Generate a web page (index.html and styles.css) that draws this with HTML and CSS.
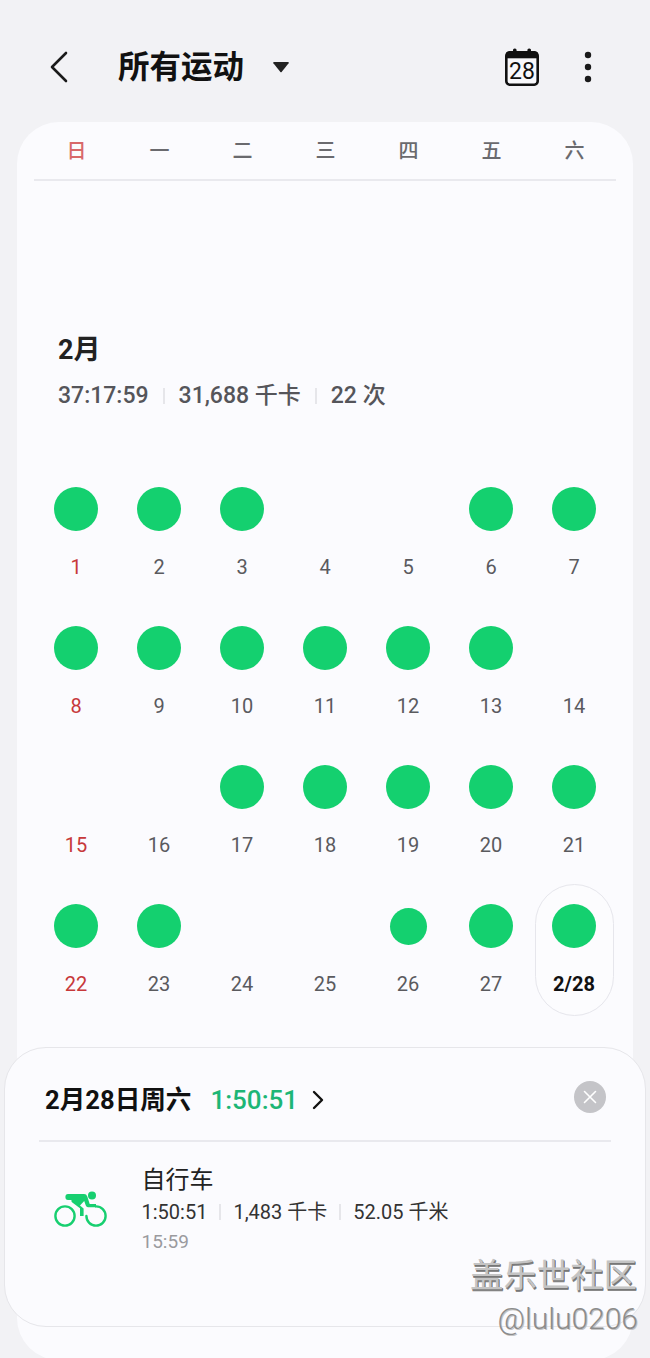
FILE: index.html
```html
<!DOCTYPE html>
<html lang="zh-CN">
<head>
<meta charset="utf-8">
<title>所有运动</title>
<link rel="stylesheet" href="styles.css">
</head>
<body>
<div class="page">
  <header class="topbar">
    <svg class="back" viewBox="0 0 20 32" width="20" height="32"><path d="M17 2 3 16l14 14" fill="none" stroke="#1a1a1a" stroke-width="2.6" stroke-linecap="round" stroke-linejoin="round"/></svg>
    <h1 class="title">所有运动</h1>
    <svg class="caret" viewBox="0 0 16 12" width="16" height="12"><path d="M1 1h14a.8.8 0 0 1 .6 1.2L8.6 11a.8.8 0 0 1-1.2 0L.4 2.2A.8.8 0 0 1 1 1z" fill="#222"/></svg>
    <svg class="cal" viewBox="0 0 34 38" width="34" height="38">
      <rect x="8" y="0.5" width="3.6" height="6" rx="1.6" fill="#111"/>
      <rect x="22.4" y="0.5" width="3.6" height="6" rx="1.6" fill="#111"/>
      <rect x="1.3" y="4.3" width="31.4" height="32.4" rx="3.4" fill="#f8f8fb" stroke="#111" stroke-width="2.6"/>
      <rect x="1.3" y="4.3" width="31.4" height="6" fill="#111"/>
      <text class="cal-num" x="17" y="31">28</text>
    </svg>
    <svg class="more" viewBox="0 0 8 32" width="8" height="32"><circle cx="4" cy="4" r="3.2" fill="#1a1a1a"/><circle cx="4" cy="16" r="3.2" fill="#1a1a1a"/><circle cx="4" cy="28" r="3.2" fill="#1a1a1a"/></svg>
  </header>

  <main class="card">
    <div class="weekdays">
      <span class="wd wd-sun">日</span><span class="wd">一</span><span class="wd">二</span><span class="wd">三</span><span class="wd">四</span><span class="wd">五</span><span class="wd">六</span>
    </div>
    <section class="summary">
      <h2 class="month">2月</h2>
      <div class="stats">
        <span>37:17:59</span><i class="sep"></i><span>31,688 千卡</span><i class="sep"></i><span>22 次</span>
      </div>
    </section>
    <div class="days">
      <div class="day"><b class="dot"></b><span class="num sun">1</span></div>
      <div class="day"><b class="dot"></b><span class="num">2</span></div>
      <div class="day"><b class="dot"></b><span class="num">3</span></div>
      <div class="day"><b class="nodot"></b><span class="num">4</span></div>
      <div class="day"><b class="nodot"></b><span class="num">5</span></div>
      <div class="day"><b class="dot"></b><span class="num">6</span></div>
      <div class="day"><b class="dot"></b><span class="num">7</span></div>

      <div class="day"><b class="dot"></b><span class="num sun">8</span></div>
      <div class="day"><b class="dot"></b><span class="num">9</span></div>
      <div class="day"><b class="dot"></b><span class="num">10</span></div>
      <div class="day"><b class="dot"></b><span class="num">11</span></div>
      <div class="day"><b class="dot"></b><span class="num">12</span></div>
      <div class="day"><b class="dot"></b><span class="num">13</span></div>
      <div class="day"><b class="nodot"></b><span class="num">14</span></div>

      <div class="day"><b class="nodot"></b><span class="num sun">15</span></div>
      <div class="day"><b class="nodot"></b><span class="num">16</span></div>
      <div class="day"><b class="dot"></b><span class="num">17</span></div>
      <div class="day"><b class="dot"></b><span class="num">18</span></div>
      <div class="day"><b class="dot"></b><span class="num">19</span></div>
      <div class="day"><b class="dot"></b><span class="num">20</span></div>
      <div class="day"><b class="dot"></b><span class="num">21</span></div>

      <div class="day"><b class="dot"></b><span class="num sun">22</span></div>
      <div class="day"><b class="dot"></b><span class="num">23</span></div>
      <div class="day"><b class="nodot"></b><span class="num">24</span></div>
      <div class="day"><b class="nodot"></b><span class="num">25</span></div>
      <div class="day"><b class="dot dot-small"></b><span class="num">26</span></div>
      <div class="day"><b class="dot"></b><span class="num">27</span></div>
      <div class="day day-selected"><b class="dot"></b><span class="num num-selected">2/28</span></div>
    </div>
  </main>

  <aside class="sheet">
    <div class="sheet-head">
      <span class="sheet-date">2月28日周六</span>
      <span class="sheet-time">1:50:51</span>
      <svg class="sheet-chevron" viewBox="0 0 12 20" width="12" height="20"><path d="M2 2l8 8-8 8" fill="none" stroke="#111" stroke-width="2.4" stroke-linecap="round" stroke-linejoin="round"/></svg>
      <span class="close">
        <svg viewBox="0 0 14 14" width="14" height="14"><path d="M1.5 1.5l11 11M12.5 1.5l-11 11" stroke="#fff" stroke-width="1.6" stroke-linecap="round"/></svg>
      </span>
    </div>
    <div class="sheet-rule"></div>
    <div class="activity">
      <svg class="bike" viewBox="0 0 60 44" width="60" height="44">
        <circle cx="15" cy="28" r="9.6" fill="none" stroke="#17cf70" stroke-width="2.4"/>
        <path d="M46 18.4a9.6 9.6 0 1 1-9.6 9.6" fill="none" stroke="#17cf70" stroke-width="2.4" stroke-linecap="round"/>
        <circle cx="42" cy="7.4" r="4" fill="#17cf70"/>
        <path d="M18 6H34q2.5 0 3.3 2.4l2.4 7.6H46v3.2H38q-1.6 0-2.2-1.6l-1.6-4.6-4.2 4.6 3.6 3V28h-3.6v-7.8l-8-6q-1.2-1.2-.4-2.2H18q-2.6-.2-2.6-3T18 6z" fill="#17cf70"/>
      </svg>
      <div class="activity-body">
        <div class="activity-name">自行车</div>
        <div class="activity-stats">
          <span>1:50:51</span><i class="sep sep-small"></i><span>1,483 千卡</span><i class="sep sep-small"></i><span>52.05 千米</span>
        </div>
        <div class="activity-at">15:59</div>
      </div>
    </div>
  </aside>

  <div class="watermark">
    <div class="wm-brand">盖乐世社区</div>
    <div class="wm-user">@lulu0206</div>
  </div>
</div>
</body>
</html>
```
FILE: styles.css
```css
* { box-sizing: border-box; }
html, body { margin: 0; padding: 0; }
body {
  background: #f2f2f5;
  font-family: Roboto, "Noto Sans CJK SC", "Noto Sans", sans-serif;
  color: #222;
}
.page {
  position: relative;
  width: 650px;
  height: 1358px;
  overflow: hidden;
}
.topbar {
  height: 122px;
  display: flex;
  align-items: center;
  padding: 14px 0 0 49px;
}
.back { flex: none; margin: -2px 49px 0 0; }
.title {
  margin: 0;
  font-size: 31.5px;
  line-height: 40px;
  font-weight: 700;
  color: #111;
  width: 155px;
}
.caret { flex: none; margin-top: -2px; }
.cal { flex: none; margin-left: 216px; margin-top: -3px; }
.cal-num {
  font-family: Roboto, sans-serif;
  font-size: 23px;
  fill: #111;
  text-anchor: middle;
}
.more { flex: none; margin-left: 45px; margin-top: -3px; }

.card {
  width: 616px;
  height: 1238px;
  margin-left: 17px;
  background: #fbfbfe;
  border-radius: 42px;
  padding: 0 17.5px;
}
.weekdays {
  display: grid;
  grid-template-columns: repeat(7, 83px);
  height: 59px;
  border-bottom: 2px solid #e9e9ee;
  margin: 0 0 0 -1px;
  width: 582px;
  padding-left: 1.5px;
  padding-bottom: 3px;
  align-items: center;
}
.wd {
  text-align: center;
  font-size: 20px;
  font-weight: 500;
  color: #6a6a6e;
}
.wd-sun { color: #d8686a; }
.summary { padding: 151px 0 0 23.5px; }
.month {
  margin: 0;
  font-size: 27px;
  line-height: 36px;
  font-weight: 700;
  color: #222;
}
.stats {
  display: flex;
  align-items: center;
  margin-top: 13px;
  height: 30px;
  font-size: 23px;
  line-height: 30px;
  font-weight: 500;
  color: #55555a;
}
.stats span, .activity-stats span { display: block; height: 100%; }
.sep {
  flex: none;
  width: 2px;
  height: 16px;
  background: #e6e6ea;
  margin: 0 14px;
}
.days {
  display: grid;
  grid-template-columns: repeat(7, 83px);
  grid-auto-rows: 139px;
  margin-top: 56px;
}
.day {
  display: flex;
  flex-direction: column;
  align-items: center;
  padding-top: 20px;
}
.dot, .nodot {
  display: block;
  flex: none;
  width: 44px;
  height: 44px;
  border-radius: 50%;
}
.dot { background: #14d06f; }
.dot-small {
  width: 37px;
  height: 37px;
  margin: 4px 0 3px;
}
.num {
  margin-top: 24px;
  font-size: 20px;
  line-height: 24px;
  color: #5a5a5e;
}
.sun { color: #c7383a; }
.day-selected {
  justify-self: center;
  width: 79px;
  height: 132px;
  border: 1px solid #e6e6ec;
  border-radius: 40px;
  padding-top: 19px;
  background: #fcfcfe;
}
.num-selected {
  font-weight: 700;
  color: #111;
}

.sheet {
  position: absolute;
  left: 4px;
  top: 1047px;
  width: 642px;
  height: 280px;
  background: #fbfbfe;
  border: 1px solid #e6e6ea;
  border-radius: 42px;
}
.sheet-head {
  display: flex;
  align-items: center;
  height: 92px;
  padding: 34px 39px 22px 40px;
}
.sheet-date {
  font-size: 25.6px;
  line-height: 36px;
  font-weight: 700;
  color: #111;
}
.sheet-time {
  font-size: 26px;
  line-height: 36px;
  font-weight: 500;
  color: #1db676;
  margin-left: 19px;
}
.sheet-chevron { flex: none; margin-left: 14px; }
.close {
  flex: none;
  display: flex;
  align-items: center;
  justify-content: center;
  width: 32px;
  height: 32px;
  border-radius: 50%;
  background: #c4c4c8;
  margin: -6px 0 0 auto;
}
.sheet-rule {
  height: 2px;
  margin: 0 34px;
  background: #e9e9ee;
}
.activity {
  display: flex;
  padding: 23px 0 0 45px;
}
.bike { flex: none; margin: 23px 31.5px 0 0; }
.activity-name {
  font-size: 24px;
  line-height: 30px;
  color: #222;
}
.activity-stats {
  display: flex;
  align-items: center;
  margin-top: 3px;
  height: 28px;
  font-size: 20px;
  line-height: 28px;
  color: #333;
}
.sep-small {
  height: 16px;
  margin: 0 12px;
}
.activity-at {
  margin-top: 3px;
  font-size: 19px;
  line-height: 26px;
  color: #9a9a9e;
}

.watermark {
  position: absolute;
  right: 13px;
  top: 1254px;
  text-align: right;
  pointer-events: none;
}
.wm-brand {
  font-size: 33.4px;
  line-height: 44px;
  font-weight: 400;
  color: #c4c4c4;
  text-shadow: 1px 1px 0 #777, 1px 2px 0 #888;
}
.wm-user {
  margin-top: 3px;
  margin-right: -1px;
  font-size: 30px;
  line-height: 36px;
  font-weight: 300;
  color: #8c8c8c;
  text-shadow: 1px 1px 0 #c4c4c4;
}
```
